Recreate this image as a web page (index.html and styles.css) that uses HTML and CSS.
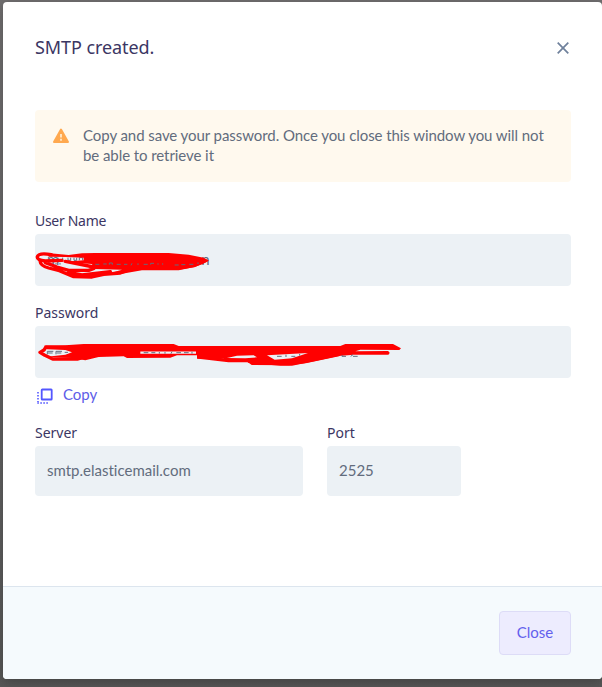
FILE: index.html
```html
<!DOCTYPE html>
<html lang="en">
<head>
<meta charset="utf-8">
<title>SMTP created.</title>
<link rel="stylesheet" href="styles.css">
</head>
<body>
<main class="modal">
  <header class="modal-header">
    <h1 class="title">SMTP created.</h1>
    <button class="dismiss" aria-label="Close dialog"><svg width="12" height="12" viewBox="0 0 12 12"><path d="M.7.7l10.6 10.6M11.3.7L.7 11.3" fill="none" stroke="#6f819c" stroke-width="1.7"/></svg></button>
  </header>
  <section class="modal-body">
    <div class="alert">
      <svg class="warn" width="18" height="16" viewBox="0 0 18 16"><path d="M9 1.5L16 14H2z" fill="#ffa94f" stroke="#ffa94f" stroke-width="2" stroke-linejoin="round"/><path d="M9 6v3.5M9 10.7v2" stroke="#fff3dc" stroke-width="1.6"/></svg>
      <p class="alert-text">Copy and save your password. Once you close this window you will not<br>be able to retrieve it</p>
    </div>
    <div class="group">
      <div class="label user-label">User Name</div>
      <div class="field tall">
        <span>m</span><span class="user-tail">n</span>
        <svg class="scribble" width="536" height="52" viewBox="0 0 536 52">
          <g transform="translate(-3 11) scale(.33333)">
            <path class="specks" d="M78 38v8M92 38v8M108 38v8h8v-8M126 38v8h8v-8M142 46v-8h10v8M48 54v5M60 54v5M72 54v5M84 54v5"/>
            <path class="ink" d="M58 29Q20 22 16 35Q14 46 40 48L90 46M24 48Q25 62 50 69L82 77L125 95L180 96L215 88L265 84L300 71L350 68L435 70L485 62L520 47M40 53L75 66L110 76L170 76L186 70M110 82L150 90L235 80M100 49L185 66"/>
            <path class="blot" d="M46 24L110 30L150 25L190 24L410 24L470 29L515 38L531 47L512 57L488 66L440 76L330 76L270 86L235 84L270 74L185 72L180 57L145 55L90 51L155 46V38L100 36L50 35Z"/>
            <path class="specks" d="M190 58h12M214 57h10M232 59v-5h9v5M254 58h12M276 58h10M300 55l-3 6M318 55v5M335 58h12M356 59v-4h10M378 59v-4M392 59v-4M428 60h12M448 59h12M472 58h12M498 57v-5"/>
          </g>
        </svg>
      </div>
    </div>
    <div class="group">
      <div class="label">Password</div>
      <div class="field tall">
        <svg class="scribble" width="536" height="52" viewBox="0 0 536 52">
          <g transform="translate(-3 12) scale(.33333)">
            <path class="ink" d="M105 28L42 27L36 36L24 43L37 51L62 63L138 63L165 55M500 57L590 68L650 68L661 76L770 77L820 71L920 50M680 54L719 67"/>
            <path class="blot" d="M36 23L100 22L155 18L425 18L440 24L925 24L940 18L1083 18L1107 31L1102 36L985 35L970 40L1068 39Q1077 44 1069 50L965 50L920 54L850 69L780 83H745L650 75L640 67L590 67L575 62L495 62V52H435L415 59L285 60L275 55L200 57L160 67L120 60L45 56L100 50L120 43L100 36L45 34Z"/>
            <path class="gap" d="M325 44H492M48 43H108"/>
            <path class="hole" d="M585 60L640 61L675 58L665 52L615 53ZM705 52L828 45L780 61L728 65Z"/>
            <path class="specks" d="M46 49v-9h18M48 45h14M72 49v-9h18M74 45h14M98 43h10M335 44h14M358 44h12M382 42v5M399 42v5M417 47l3-6M433 44h14M456 44h14M480 47v-6M735 55h14M762 50v7M778 55h12M803 48v5M930 51v4h12M956 55l7-5M963 55h14"/>
          </g>
        </svg>
      </div>
      <button class="copy">
        <svg width="16" height="16" viewBox="0 0 16 16" fill="none" stroke="#5457ff"><rect x="4.7" y="1.5" width="10" height="10" rx=".6" stroke-width="1.8"/><path d="M1 4v10M.3 15h12" stroke-width="1.6" stroke-dasharray="1.6 1.4"/></svg>
        <span>Copy</span>
      </button>
    </div>
    <div class="row">
      <div class="server"><div class="label">Server</div><div class="field">smtp.elasticemail.com</div></div>
      <div class="port"><div class="label">Port</div><div class="field">2525</div></div>
    </div>
  </section>
  <footer class="modal-footer"><button class="close">Close</button></footer>
</main>
</body>
</html>
```
FILE: styles.css
```css
* { box-sizing: border-box; }
body {
  margin: 0;
  height: 687px;
  padding: 2px 0 0 3px;
  overflow: hidden;
  background: linear-gradient(#716f70, #666 50%, #575757);
  font: 15px/20px Lato, "Noto Sans", sans-serif;
  font-variant-ligatures: none;
  color: #626c7d;
}
button { border: 0; padding: 0; background: none; font: inherit; }
svg { display: block; }
.modal {
  width: 599px;
  height: 677px;
  display: flex;
  flex-direction: column;
  background: #fff;
  border-radius: 4px;
  overflow: hidden;
  box-shadow: 0 3px 12px rgba(0, 0, 0, .25);
}
.modal-header {
  height: 108px;
  padding: 33px 33px 0 32px;
  display: flex;
  justify-content: space-between;
  align-items: flex-start;
}
.title { margin: 0; font: 400 18px/24px "Noto Sans", sans-serif; letter-spacing: -.08px; color: #3b3663; }
.dismiss { padding-top: 7px; }
.modal-body { flex: 1; padding: 0 31px 0 32px; }
.alert {
  height: 72px;
  margin-bottom: 28px;
  padding: 15px 0 0 17px;
  display: flex;
  gap: 13px;
  background: #fff9ee;
  border-radius: 4px;
}
.warn { margin-top: 3px; flex: none; }
.alert-text { margin: 0; white-space: nowrap; letter-spacing: -.07px; }
.label { height: 24px; font: 400 14px/22px "Noto Sans", sans-serif; color: #3b3663; }
.user-label { letter-spacing: -.3px; }
.group { margin-bottom: 16px; }
.field {
  position: relative;
  height: 50px;
  padding: 0 12px 2px;
  display: flex;
  align-items: center;
  background: #ecf1f5;
  border-radius: 4px;
}
.tall { height: 52px; }
.user-tail { margin-left: 142px; }
.scribble { position: absolute; left: 0; top: 0; }
.ink { fill: none; stroke: #f00; stroke-width: 10; stroke-linecap: round; stroke-linejoin: round; }
.blot { fill: #f00; }
.specks { fill: none; stroke: #626c7d; stroke-width: 3; }
.gap { fill: none; stroke: #ecf1f5; stroke-width: 7; }
.hole { fill: #ecf1f5; }
.copy { height: 20px; margin: 6px 0 0 2px; display: flex; gap: 10px; align-items: center; color: #5d5de8; }
.copy svg { margin-top: 3px; }
.row { display: flex; gap: 24px; margin-top: 18px; }
.server { width: 268px; }
.port { width: 134px; }
.modal-footer {
  height: 93px;
  padding: 24px 31px 0;
  display: flex;
  justify-content: flex-end;
  border-top: 1px solid #dce5ee;
  background: #f5fafd;
}
.close { width: 72px; height: 44px; padding-bottom: 2px; border: 1px solid #dddcf7; border-radius: 4px; background: #edecfe; color: #6260ed; }
```
